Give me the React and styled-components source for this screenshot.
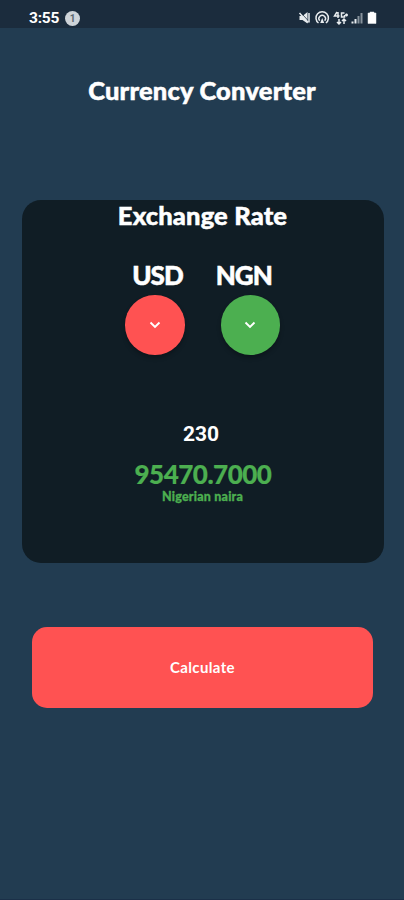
import React from 'react';
import styled, { createGlobalStyle } from 'styled-components';

const GlobalStyle = createGlobalStyle`
  * {
    box-sizing: border-box;
  }
  body {
    margin: 0;
    background: #223c51;
  }
`;

const Screen = styled.div`
  display: flex;
  flex-direction: column;
  width: 404px;
  height: 900px;
  background: #223c51;
  border-bottom: 1px solid #1b3048;
  font-family: Lato, 'Liberation Sans', sans-serif;
  color: #ffffff;
`;

const StatusBar = styled.header`
  display: flex;
  align-items: center;
  height: 28px;
  padding: 8px 26px 0 29px;
  background: #1b2c3d;
`;

const Clock = styled.span`
  width: 32px;
  font-family: Roboto, sans-serif;
  font-weight: 700;
  font-size: 15.5px;
  line-height: 20px;
  letter-spacing: -0.2px;
`;

const Notice = styled.span`
  width: 15px;
  height: 15px;
  margin-left: 4px;
  border-radius: 50%;
  background: #ced4d9;
  font-family: Roboto, sans-serif;
  font-weight: 700;
  font-size: 10px;
  line-height: 15px;
  text-align: center;
  color: #5b6870;
`;

const StatusIcons = styled.svg`
  width: 80px;
  height: 16px;
  margin-left: auto;
`;

const Title = styled.h1`
  margin: 46px 0 0;
  font-weight: 900;
  font-size: 25.5px;
  line-height: 32px;
  letter-spacing: 0.2px;
  text-align: center;
  -webkit-text-stroke: 0.5px currentColor;
`;

const Card = styled.section`
  display: flex;
  flex-direction: column;
  align-items: center;
  height: 363px;
  margin: 94px 20px 0 22px;
  border-radius: 19px;
  background: #101d25;
`;

const CardTitle = styled.h2`
  margin: -1px 1px 0 0;
  font-weight: 900;
  font-size: 25.5px;
  line-height: 32px;
  letter-spacing: 0.15px;
  -webkit-text-stroke: 0.5px currentColor;
`;

const Codes = styled.div`
  display: flex;
  gap: 33px;
  margin-top: 28px;
  margin-right: 2px;
`;

const Code = styled.span`
  font-weight: 900;
  font-size: 26px;
  line-height: 32px;
  letter-spacing: -1px;
  -webkit-text-stroke: 0.5px currentColor;
`;

const Pickers = styled.div`
  display: flex;
  gap: 36px;
  margin-top: 4px;
  margin-right: 1px;
`;

const Picker = styled.button`
  display: flex;
  align-items: center;
  justify-content: center;
  width: 59.5px;
  height: 59.5px;
  padding: 0;
  border: 0;
  border-radius: 50%;
  background: ${props => props.$color};
  box-shadow: 0 3px 4px rgba(0, 0, 0, 0.25);
`;

const Amount = styled.span`
  margin-top: 67.5px;
  margin-right: 4px;
  font-family: Roboto, sans-serif;
  font-weight: 700;
  font-size: 21px;
  line-height: 24px;
`;

const Result = styled.span`
  margin-top: 12px;
  font-weight: 900;
  font-size: 26px;
  line-height: 32px;
  letter-spacing: -0.5px;
  color: #4caf50;
  -webkit-text-stroke: 0.2px currentColor;
`;

const Unit = styled.span`
  margin-right: 1px;
  font-weight: 900;
  font-size: 12.5px;
  line-height: 14px;
  letter-spacing: 0.2px;
  color: #4caf50;
  -webkit-text-stroke: 0.3px currentColor;
`;

const CalculateButton = styled.button`
  height: 81px;
  margin: 64px 31px 0 32px;
  padding: 0 0 1px;
  border: 0;
  border-radius: 15px;
  background: #ff5252;
  font-family: inherit;
  font-weight: 700;
  font-size: 15px;
  letter-spacing: 0.35px;
  color: #ffffff;
`;

const Chevron = () => (
  <svg width="12" height="8" viewBox="0 0 12 8" fill="none">
    <path d="M1.500 1.500 6 6l4.500-4.500" stroke="#fff" strokeWidth="1.900" />
  </svg>
);

const PhoneStatus = () => (
  <StatusIcons viewBox="0 0 80 16" fill="none" stroke="#e8ecef">
    {/* muted speaker */}
    <path d="M1.500 6h3L9.500 2v11.500L4.500 10h-3z" fill="#e8ecef" stroke="none" />
    <path d="M2.500 2.500l8 8.500" stroke="#1b2c3d" strokeWidth="0.900" />
    <path d="M1.500 3l8.500 9.500M11 3v9.500" strokeWidth="1.500" />
    {/* hotspot */}
    <path d="M20.500 13a6.200 6.200 0 1 1 7.400 0" strokeWidth="1.500" />
    <path d="M21.700 10.800a3.300 3.300 0 1 1 5 0" strokeWidth="1.400" />
    <path d="M22.200 13l2-5 2 5z" fill="#e8ecef" stroke="none" />
    {/* mobile data */}
    <path d="M39 2l-2.500 4h5M40 2v6M46.500 3h-3v4h3V5M47 5h3M48.500 3.500v3" strokeWidth="1.500" />
    <path d="M41 9v5M39 12l2 2 2-2M46 14V9M44 11l2-2 2 2" strokeWidth="1.500" />
    {/* signal */}
    <path d="M54.500 11.500v2M57.500 9v4.500" strokeWidth="2" />
    <path d="M60.500 6v7.500M63.500 3v10.500" stroke="#87929c" strokeWidth="2" />
    {/* battery */}
    <path d="M70 3h2V2h4v1h2v10.500h-8z" fill="#fff" strokeWidth="0.500" />
  </StatusIcons>
);

const App = () => (
  <>
    <GlobalStyle />
    <Screen>
      <StatusBar>
        <Clock>3:55</Clock>
        <Notice>1</Notice>
        <PhoneStatus />
      </StatusBar>
      <Title>Currency Converter</Title>
      <Card>
        <CardTitle>Exchange Rate</CardTitle>
        <Codes>
          <Code>USD</Code>
          <Code>NGN</Code>
        </Codes>
        <Pickers>
          <Picker $color="#ff5252" aria-label="From currency">
            <Chevron />
          </Picker>
          <Picker $color="#4caf50" aria-label="To currency">
            <Chevron />
          </Picker>
        </Pickers>
        <Amount>230</Amount>
        <Result>95470.7000</Result>
        <Unit>Nigerian naira</Unit>
      </Card>
      <CalculateButton>Calculate</CalculateButton>
    </Screen>
  </>
);

export default App;
